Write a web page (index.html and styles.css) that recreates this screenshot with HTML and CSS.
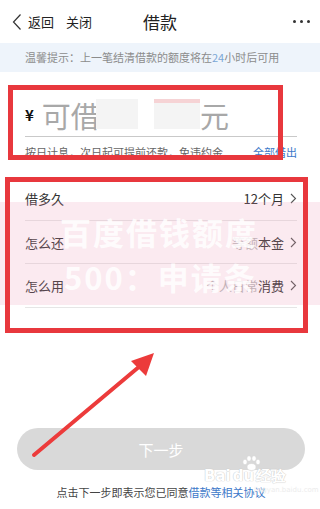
FILE: index.html
```html
<!DOCTYPE html>
<html lang="zh">
<head>
<meta charset="utf-8">
<link rel="stylesheet" href="styles.css">
</head>
<body>
<div class="page">
  <header class="nav">
    <div class="nav-left">
      <svg class="back" width="10" height="18" viewBox="0 0 10 18"><path d="M8.5 1.5 L1.5 9 L8.5 16.5" fill="none" stroke="#333" stroke-width="1.2"/></svg>
      <span class="nav-link">返回</span>
      <span class="nav-link">关闭</span>
    </div>
    <div class="nav-title">借款</div>
    <div class="nav-more"><i></i><i></i><i></i></div>
  </header>
  <div class="notice">温馨提示：上一笔结清借款的额度将在<span class="num">24</span>小时后可用</div>

  <section class="amount">
    <div class="amount-row">
      <span class="yen">¥</span>
      <span class="amount-ph">可借</span>
      <span class="mask mask-a"></span>
      <span class="mask mask-b"></span>
      <span class="amount-ph">元</span>
    </div>
    <div class="amount-sub">
      <span>按日计息，次日起可提前还款，免违约金</span>
      <span class="link">全部借出</span>
    </div>
  </section>

  <section class="rows">
    <div class="row"><span class="label">借多久</span><span class="value">12个月<svg class="chev" width="7" height="11" viewBox="0 0 7 11"><path d="M1 1 L5.5 5.5 L1 10" fill="none" stroke="#555" stroke-width="1.1"/></svg></span></div>
    <div class="row"><span class="label">怎么还</span><span class="value"><span class="faded">等额</span>本金<svg class="chev" width="7" height="11" viewBox="0 0 7 11"><path d="M1 1 L5.5 5.5 L1 10" fill="none" stroke="#555" stroke-width="1.1"/></svg></span></div>
    <div class="row"><span class="label">怎么用</span><span class="value"><span class="faded">个人日常</span>消费<svg class="chev" width="7" height="11" viewBox="0 0 7 11"><path d="M1 1 L5.5 5.5 L1 10" fill="none" stroke="#555" stroke-width="1.1"/></svg></span></div>
  </section>

  <div class="action">
    <button class="next">下一步</button>
    <p class="agree">点击下一步即表示您已同意<span class="link">借款等相关协议</span></p>
  </div>

  <div class="wm-band">
    <div class="wm-line">百度借钱额度</div>
    <div class="wm-line wm-line2">500：申请条</div>
  </div>
  <div class="redbox box1"></div>
  <div class="redbox box2"></div>
  <svg class="arrow" width="320" height="509" viewBox="0 0 320 509">
    <line x1="34" y1="455" x2="140" y2="366" stroke="#ec3b3b" stroke-width="4" stroke-linecap="round"/>
    <polygon points="154,353 131,361 146,376" fill="#ec3b3b"/>
  </svg>
  <div class="baidu">
    <svg class="paw" width="22" height="16" viewBox="0 0 22 16">
      <ellipse cx="5" cy="7" rx="2.2" ry="2.8" fill="#fff" stroke="#d4d4d4" stroke-width="0.6"/>
      <ellipse cx="9" cy="3.5" rx="2.2" ry="2.8" fill="#fff" stroke="#d4d4d4" stroke-width="0.6"/>
      <ellipse cx="14" cy="3.5" rx="2.2" ry="2.8" fill="#fff" stroke="#d4d4d4" stroke-width="0.6"/>
      <ellipse cx="18" cy="7" rx="2.2" ry="2.8" fill="#fff" stroke="#d4d4d4" stroke-width="0.6"/>
      <ellipse cx="11.5" cy="12" rx="4.5" ry="3.5" fill="#fff" stroke="#d4d4d4" stroke-width="0.6"/>
    </svg>
    <div class="baidu-text">Bai<span>du</span>经验</div>
    <div class="baidu-url">jingyan.baidu.com</div>
  </div>
</div>
</body>
</html>
```

FILE: styles.css
```css
* { box-sizing: border-box; margin: 0; padding: 0; }
html, body { width: 320px; height: 509px; overflow: hidden; background: #fff; }
body { font-family: "Noto Sans CJK SC", "Noto Sans", sans-serif; color: #333; }
.page { position: relative; width: 320px; height: 509px; }

.nav { height: 43px; display: flex; align-items: center; justify-content: space-between; padding: 0 10px 0 12px; position: relative; }
.nav-left { display: flex; align-items: center; }
.back { margin-right: 6px; }
.nav-link { font-size: 13px; line-height: 18px; color: #222; margin-right: 12px; }
.nav-title { position: absolute; left: 0; right: 0; text-align: center; font-size: 17px; line-height: 20px; color: #222; pointer-events: none; }
.nav-more { display: flex; gap: 4px; }
.nav-more i { width: 3px; height: 3px; border-radius: 50%; background: #333; display: block; }

.notice { height: 29px; background: #eef4fb; font-size: 11px; line-height: 29px; color: #8c8c8c; padding-left: 25px; }
.notice .num { color: #7aa6d6; }

.amount { padding: 0 23px 0 25px; }
.amount-row { height: 65px; display: flex; align-items: flex-end; padding-bottom: 4px; border-bottom: 1px solid #c9c9c9; }
.yen { font-size: 15px; font-weight: 700; color: #111; line-height: 34px; margin-right: 8px; }
.amount-ph { font-size: 29px; line-height: 34px; color: #a8a8a8; }
.mask { display: block; height: 30px; background: #f4f4f4; align-self: flex-end; margin-bottom: 3px; }
.mask-a { width: 42px; margin-left: -4px; }
.mask-b { width: 46px; margin-left: 16px; border-top: 4px solid #f6d3d5; }
.amount-sub { display: flex; justify-content: space-between; margin-top: 7px; font-size: 11px; line-height: 16px; color: #666; }
.link { color: #3d79c9; }

.rows { margin-top: 17px; padding: 0 23px 0 25px; }
.row { height: 43.7px; display: flex; align-items: center; justify-content: space-between; border-bottom: 1px solid #e6e6e6; }
.label { font-size: 13px; color: #333; }
.value { font-size: 13px; color: #333; display: flex; align-items: center; }
.faded { color: #9a9a9a; opacity: 0.7; }
.chev { margin-left: 6px; }

.action { position: absolute; left: 0; right: 0; top: 428px; padding: 0 15px 0 17px; }
.next { width: 100%; height: 42px; border: 0; border-radius: 21px; background: #d9d9d9; color: #fff; font-family: inherit; font-size: 15px; }
.agree { text-align: center; font-size: 11px; line-height: 16px; color: #444; margin-top: 14px; }

.wm-band { position: absolute; left: 0; top: 202px; width: 320px; height: 103px; background: rgba(236, 150, 180, 0.2); overflow: hidden; }
.wm-line { position: absolute; left: 60px; top: 12px; font-size: 31px; font-weight: 700; line-height: 36px; color: rgba(255,255,255,0.85); letter-spacing: 2px; white-space: nowrap; }
.wm-line2 { left: 64px; top: 57px; }

.redbox { position: absolute; border: 5px solid #e8383d; }
.box1 { left: 8px; top: 85px; width: 275px; height: 75px; }
.box2 { left: 5px; top: 177px; width: 303px; height: 156px; }

.arrow { position: absolute; left: 0; top: 0; pointer-events: none; }

.baidu { position: absolute; left: 204px; top: 455px; width: 90px; }
.paw { position: absolute; left: 36px; top: 0; }
.baidu-text { position: absolute; top: 13px; left: 0; font-family: "DejaVu Sans", sans-serif; font-size: 15px; font-weight: 700; line-height: 16px; color: #fff; text-shadow: 0 0 1px #c8c8c8, 0 0 1px #c8c8c8; white-space: nowrap; }
.baidu-text span { margin: 0 2px; }
.baidu-url { position: absolute; top: 31px; left: 50px; font-family: "DejaVu Sans", sans-serif; font-size: 7px; color: #ececec; white-space: nowrap; }
```
